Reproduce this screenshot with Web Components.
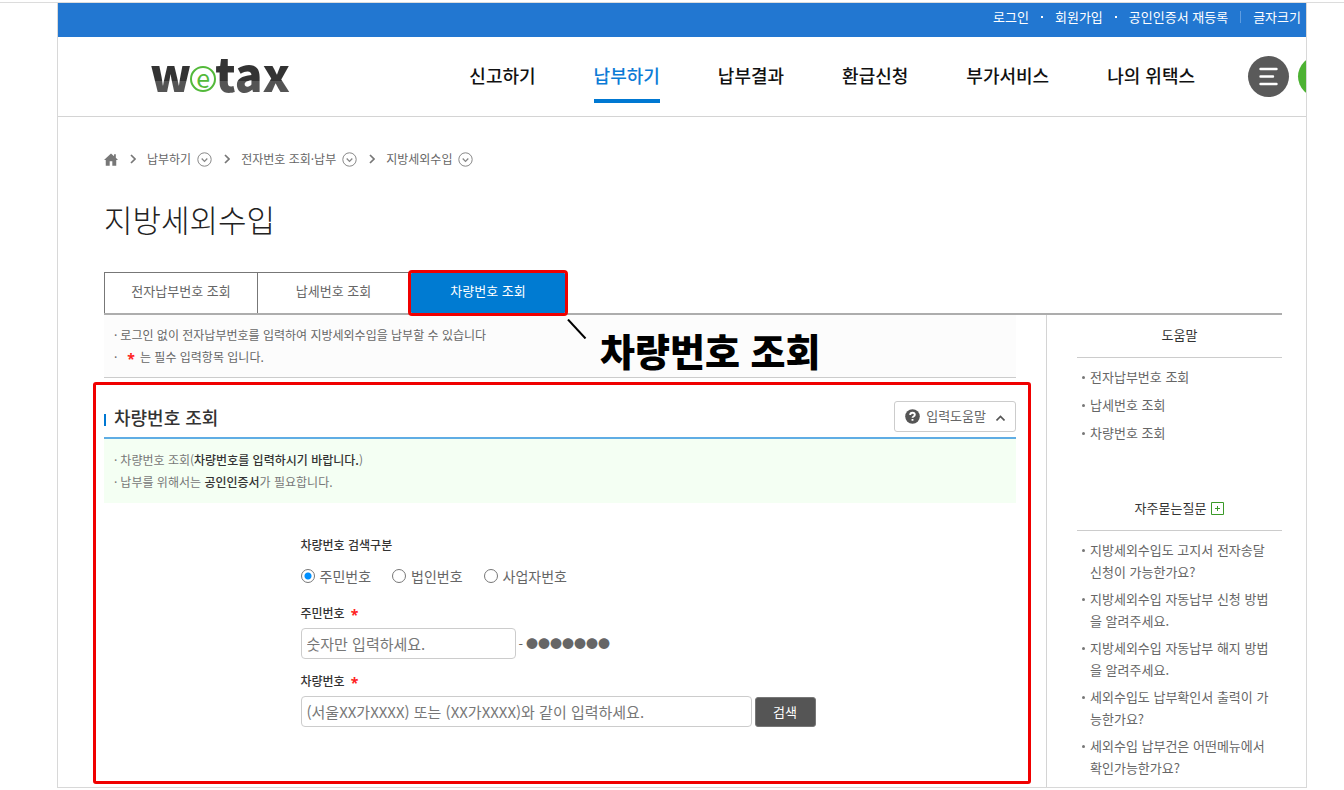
<!DOCTYPE html>
<html lang="ko">
<head>
<meta charset="utf-8">
<title>위택스 - 지방세외수입</title>
<style>
  html, body { margin: 0; background: #fff; }
  body { font: 13px/22px "Noto Sans CJK KR", "Noto Sans", sans-serif; color: #666; }
</style>
</head>
<body>
<wt-page>
  <wt-topbar></wt-topbar>
  <wt-header></wt-header>
  <wt-content>
    <wt-breadcrumb slot="head"></wt-breadcrumb>
    <span slot="title">지방세외수입</span>
    <wt-tabs slot="tabs"></wt-tabs>
    <wt-notice></wt-notice>
    <wt-panel>
      <span slot="title">차량번호 조회</span>
      <wt-search-form></wt-search-form>
    </wt-panel>
    <wt-sidebar slot="side"></wt-sidebar>
  </wt-content>
</wt-page>
<script>
const BASE = `
  :host, *, *::before, *::after { box-sizing: border-box; }
  ul, ol, h1, h2, h3, p { margin: 0; padding: 0; font-weight: 400; }
  ul, ol { list-style: none; }
  a { color: inherit; text-decoration: none; }
  button, input { font: inherit; color: inherit; margin: 0; }
  svg { display: block; flex: none; }
`;
function define(name, css, html) {
  customElements.define(name, class extends HTMLElement {
    constructor() {
      super();
      this.attachShadow({ mode: "open" }).innerHTML = `<style>${BASE}${css}</style>${html}`;
    }
  });
}

define("wt-page", `
  :host { display: block; padding-top: 2px; }
  .rule { border-top: 1px solid #dcdcdc; }
  .frame { margin: 0 37px 0 57px; border: 1px solid #d8d8d8; border-top: 0; overflow: hidden; }
`, `<div class="rule"></div><div class="frame"><slot></slot></div>`);

define("wt-topbar", `
  :host { display: block; background: #2277d1; color: #fff; height: 34px; }
  ul { display: flex; justify-content: flex-end; align-items: center; padding: 3px 5px 0 0; gap: 12px; }
  .dot { width: 2px; height: 2px; background: #fff; }
  .bar { width: 1px; height: 12px; background: #5f9de0; }
`, `<ul>
  <li><a href="#login">로그인</a></li><li class="dot"></li>
  <li><a href="#join">회원가입</a></li><li class="dot"></li>
  <li><a href="#cert">공인인증서 재등록</a></li><li class="bar"></li>
  <li><a href="#size">글자크기</a></li>
</ul>`);

define("wt-header", `
  :host { display: flex; align-items: center; height: 80px; padding-left: 92px; border-bottom: 1px solid #d4d4d4; color: #111; }
  .logo { display: flex; align-items: baseline; font-size: 46px; font-weight: 900; line-height: 56px; margin-top: -10px; }
  .ink { color: #333; -webkit-text-fill-color: transparent; background: linear-gradient(#333 66%, #545454 66%); -webkit-background-clip: text; background-clip: text; }
  .e { display: flex; align-items: center; justify-content: center; width: 26px; height: 26px; border: 2px solid #53b93a; border-radius: 50%; color: #53b93a; font-size: 25px; font-weight: 400; line-height: 20px; padding-bottom: 4px; align-self: flex-end; margin: 0 -1px 8px; }
  nav { margin-left: auto; }
  nav ul { display: flex; gap: 58px; font-size: 18px; font-weight: 500; line-height: 28px; }
  nav a { display: block; padding: 11px 0 10px; border-bottom: 4px solid transparent; white-space: nowrap; }
  nav a.on { color: #0c7bd6; border-color: #0078d2; }
  button { width: 41px; height: 41px; border: 0; border-radius: 50%; padding: 0; background: #5a5a5a; margin-left: 53px; flex: none; }
  .green { background: #4db233; margin: 0 -33px 0 9px; }
`, `<a class="logo" href="#home" aria-label="wetax"><span class="ink">w</span><span class="e">e</span><span class="ink">tax</span></a>
<nav><ul>
  <li><a href="#1">신고하기</a></li><li><a class="on" href="#2">납부하기</a></li><li><a href="#3">납부결과</a></li>
  <li><a href="#4">환급신청</a></li><li><a href="#5">부가서비스</a></li><li><a href="#6">나의 위택스</a></li>
</ul></nav>
<button type="button" aria-label="전체메뉴"><svg width="41" height="41" viewBox="0 0 41 41" stroke="#fff" stroke-width="2.4" stroke-linecap="round"><path d="M12.500 13H28.500M12.500 20.500H25M12.500 28H28.500"/></svg></button>
<button type="button" class="green" aria-label="검색"></button>`);

define("wt-content", `
  :host { display: block; padding: 31px 24px 0 46px; }
  h1 { font-size: 31px; line-height: 46px; font-weight: 300; color: #222; margin: 26px 0 30px; }
  .cols { display: flex; }
  main { flex: 1; min-width: 0; padding-right: 30px; }
`, `<slot name="head"></slot><h1><slot name="title"></slot></h1><slot name="tabs"></slot>
<div class="cols"><main><slot></slot></main><slot name="side"></slot></div>`);

const drop = `<svg width="15" height="15" viewBox="0 0 15 15" fill="none" stroke="#888"><circle cx="7.500" cy="7.500" r="6.700"/><path d="M4.700 6.500l2.800 2.900 2.800-2.900" stroke-width="1.300"/></svg>`;
const arrow = `<svg width="6" height="10" viewBox="0 0 6 10" fill="none" stroke="#777" stroke-width="1.700"><path d="M1 1l4 4-4 4"/></svg>`;
define("wt-breadcrumb", `
  :host { display: block; font-size: 12px; }
  ol { display: flex; align-items: center; gap: 12px; }
  li, a { display: flex; align-items: center; gap: 6px; }
  li { gap: 11px; }
`, `<ol>
  <li><a href="#home" aria-label="홈"><svg width="14" height="13" viewBox="0 0 16 14" fill="#777"><path d="M8 0L0 7.500h2V14h4.500V9h3v5H14V7.500h2L13.500 5V1h-2v2.200z"/></svg></a></li>
  <li>${arrow}<a href="#pay">납부하기 ${drop}</a></li>
  <li>${arrow}<a href="#num">전자번호 조회·납부 ${drop}</a></li>
  <li>${arrow}<a href="#local">지방세외수입 ${drop}</a></li>
</ol>`);

define("wt-tabs", `
  :host { display: block; border-bottom: 2px solid #adadad; }
  ul { display: flex; width: 462px; height: 41px; border: 1px solid #777; border-width: 1px 0 0 1px; }
  li { width: 152px; position: relative; }
  li + li { border-left: 1px solid #777; }
  li.on { width: 154px; margin-left: 2px; border: 0; background: #007bd2; outline: 3px solid #f00000; border-radius: 1px; color: #fff; z-index: 1; }
  a { display: block; text-align: center; line-height: 36px; }
  .note { position: absolute; left: 156px; top: 46px; display: flex; color: #000; pointer-events: none; white-space: nowrap; }
  .note strong { font-size: 38px; line-height: 50px; font-weight: 900; margin: 6px 0 0 13px; }
`, `<ul>
  <li><a href="#a">전자납부번호 조회</a></li>
  <li><a href="#b">납세번호 조회</a></li>
  <li class="on"><a href="#c">차량번호 조회</a>
    <div class="note"><svg width="20" height="20" viewBox="0 0 20 20" stroke="#000" stroke-width="2"><path d="M1 0.500L18.500 19.500"/></svg><strong>차량번호 조회</strong></div>
  </li>
</ul>`);

define("wt-notice", `
  :host { display: block; background: #fcfcfc; border-bottom: 1px solid #ccc; padding: 9px 10px; font-size: 12px; }
  li { display: flex; gap: 3px; }
  i { color: #f22; font: 700 14px/26px "Noto Sans", sans-serif; margin: 0 2px 0 7px; height: 22px; }
`, `<ul>
  <li><span>·</span><span>로그인 없이 전자납부번호를 입력하여 지방세외수입을 납부할 수 있습니다</span></li>
  <li><span>·</span><i>*</i><span>는 필수 입력항목 입니다.</span></li>
</ul>`);

define("wt-panel", `
  :host { display: block; margin: 4px -15px 3px -11px; padding: 0 12px 0 8px; border: 3px solid #f00000; border-radius: 3px; }
  header { display: flex; align-items: center; justify-content: space-between; height: 54px; border-bottom: 2px solid #5fade4; padding-top: 10px; }
  h2 { display: flex; align-items: center; gap: 8px; font-size: 18px; font-weight: 500; color: #333; padding-top: 2px; }
  h2::before { content: ""; width: 2px; height: 12px; background: #0078d2; margin-top: 6px; }
  button { display: flex; align-items: center; gap: 6px; height: 31px; padding: 0 10px; border: 1px solid #ccc; border-radius: 3px; background: #fff; white-space: nowrap; }
  button svg:last-child { margin: 3px 0 0 4px; }
  .tip { background: #f4fff3; padding: 10px; height: 64px; font-size: 12px; color: #777; }
  li { display: flex; gap: 3px; }
  b { font-weight: 500; color: #333; }
`, `<header><h2><slot name="title"></slot></h2>
  <button type="button"><svg width="15" height="15" viewBox="0 0 15 15"><circle cx="7.500" cy="7.500" r="7.300" fill="#555"/><path d="M5.200 6q0-2.300 2.300-2.300t2.300 2q0 1.200-1.300 1.800-1 .5-1 1.300M7.500 10v1.800" fill="none" stroke="#fff" stroke-width="1.900"/></svg><span>입력도움말</span><svg width="9" height="6" viewBox="0 0 9 6" fill="none" stroke="#555" stroke-width="1.600"><path d="M.5 5.500l4-4 4 4"/></svg></button>
</header>
<ul class="tip">
  <li><span>·</span><span>차량번호 조회(<b>차량번호를 입력하시기 바랍니다.</b>)</span></li>
  <li><span>·</span><span>납부를 위해서는 <b>공인인증서</b>가 필요합니다.</span></li>
</ul>
<slot></slot>`);

define("wt-search-form", `
  :host { display: block; padding-right: 4px; }
  form { width: 515px; max-width: 100%; margin: 0 auto; padding: 31px 0 43px; }
  fieldset { border: 0; margin: 0; padding: 0; }
  legend, .name { display: flex; gap: 6px; padding: 0; font-size: 12px; font-weight: 500; color: #333; line-height: 22px; }
  .name i { color: #f22; font: 700 14px/26px "Noto Sans", sans-serif; height: 22px; }
  .radios { display: flex; gap: 21px; font-size: 14px; margin: 9px 0 15px; }
  .radios label { display: flex; align-items: center; gap: 5px; }
  input[type=radio] { appearance: none; width: 14px; height: 14px; border: 1px solid #777; border-radius: 50%; background: #fff; }
  input[type=radio]:checked { background: radial-gradient(circle, #0090ff 3px, #fff 4px); }
  .row { display: flex; align-items: center; margin: 4px 0 11px; gap: 3px; }
  input[type=text] { height: 31px; border: 1px solid #ccc; border-radius: 4px; padding: 0 5px; font-size: 15px; background: #fff; min-width: 0; }
  ::placeholder { color: #777; opacity: 1; }
  .mask { font-size: 12px; }
  #rrn { width: 215px; }
  #car { flex: 1; }
  button { width: 61px; height: 30px; border: 1px solid #777; border-radius: 3px; background: #555; color: #fff; padding: 0; }
`, `<form>
  <fieldset><legend>차량번호 검색구분</legend>
    <div class="radios">
      <label><input type="radio" name="k" checked>주민번호</label>
      <label><input type="radio" name="k">법인번호</label>
      <label><input type="radio" name="k">사업자번호</label>
    </div>
  </fieldset>
  <label class="name" for="rrn">주민번호 <i>*</i></label>
  <div class="row"><input type="text" id="rrn" placeholder="숫자만 입력하세요."><span>-</span><span class="mask">●●●●●●●</span></div>
  <label class="name" for="car">차량번호 <i>*</i></label>
  <div class="row"><input type="text" id="car" placeholder="(서울XX가XXXX) 또는 (XX가XXXX)와 같이 입력하세요."><button type="button">검색</button></div>
</form>`);

define("wt-sidebar", `
  :host { display: block; flex: none; width: 236px; border-left: 1px solid #d4d4d4; padding: 0 0 2px 30px; }
  h3 { display: flex; align-items: center; justify-content: center; gap: 5px; height: 43px; border-bottom: 1px solid #ccc; color: #333; font-size: 13px; padding-bottom: 2px; }
  h3.faq { margin-top: 38px; }
  ul { display: grid; padding: 8px 0 0 5px; }
  li { padding-bottom: 6px; }
  .faq-list li { padding-bottom: 5px; }
  a { display: flex; gap: 6px; word-break: break-all; }
  a::before { content: ""; flex: none; width: 3px; height: 3px; background: #777; border-radius: 50%; margin: 10px -1px 0 0; }
  .faq-list a { padding-right: 4px; }
`, `<h3>도움말</h3>
<ul><li><a href="#a">전자납부번호 조회</a></li><li><a href="#b">납세번호 조회</a></li><li><a href="#c">차량번호 조회</a></li></ul>
<h3 class="faq">자주묻는질문<svg width="13" height="13" viewBox="0 0 13 13" fill="none" stroke="#3a9a28"><path d="M.5 .5h12v12H.5zM4 6.500h5M6.500 4v5"/></svg></h3>
<ul class="faq-list">
  <li><a href="#q1">지방세외수입도 고지서 전자송달 신청이 가능한가요?</a></li>
  <li><a href="#q2">지방세외수입 자동납부 신청 방법을 알려주세요.</a></li>
  <li><a href="#q3">지방세외수입 자동납부 해지 방법을 알려주세요.</a></li>
  <li><a href="#q4">세외수입도 납부확인서 출력이 가능한가요?</a></li>
  <li><a href="#q5">세외수입 납부건은 어떤메뉴에서 확인가능한가요?</a></li>
</ul>`);
</script>
</body>
</html>
